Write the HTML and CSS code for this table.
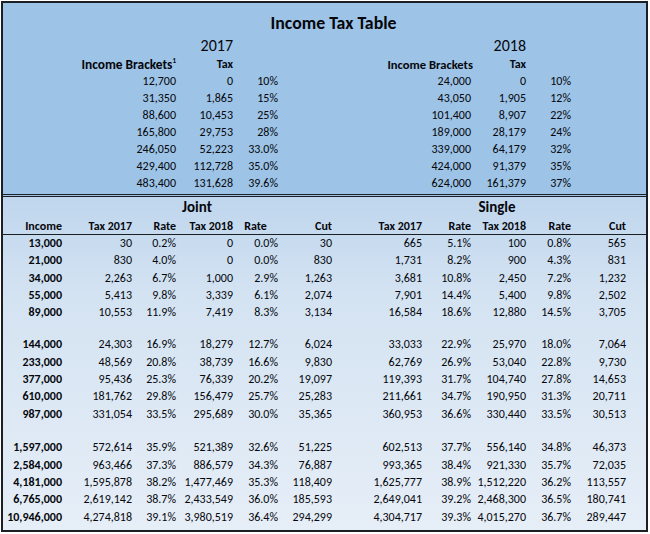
FILE: index.html
```html
<!DOCTYPE html>
<html>
<head>
<meta charset="utf-8">
<link rel="stylesheet" href="styles.css">
</head>
<body>
<div class="sheet">
  <section class="brackets">
    <div class="title">Income Tax Table</div>
    <div class="row yrow"><span class="c4 yr">2017</span><span class="c10 yr">2018</span></div>
    <div class="row trow b"><span class="s13 lbl">Income Brackets<sup>1</sup></span><span>Tax</span><span class="s79 lbl2">Income Brackets</span><span>Tax</span></div>
    <div class="row trow"><span class="c3">12,700</span><span>0</span><span>10%</span><span class="c9">24,000</span><span>0</span><span>10%</span></div>
    <div class="row trow"><span class="c3">31,350</span><span>1,865</span><span>15%</span><span class="c9">43,050</span><span>1,905</span><span>12%</span></div>
    <div class="row trow"><span class="c3">88,600</span><span>10,453</span><span>25%</span><span class="c9">101,400</span><span>8,907</span><span>22%</span></div>
    <div class="row trow"><span class="c3">165,800</span><span>29,753</span><span>28%</span><span class="c9">189,000</span><span>28,179</span><span>24%</span></div>
    <div class="row trow"><span class="c3">246,050</span><span>52,223</span><span>33.0%</span><span class="c9">339,000</span><span>64,179</span><span>32%</span></div>
    <div class="row trow"><span class="c3">429,400</span><span>112,728</span><span>35.0%</span><span class="c9">424,000</span><span>91,379</span><span>35%</span></div>
    <div class="row trow"><span class="c3">483,400</span><span>131,628</span><span>39.6%</span><span class="c9">624,000</span><span>161,379</span><span>37%</span></div>
  </section>
  <section class="results">
    <div class="row grow b"><span class="joint">Joint</span><span class="single">Single</span></div>
    <div class="row hrow b"><span>Income</span><span>Tax 2017</span><span>Rate</span><span>Tax 2018</span><span class="ctr">Rate</span><span>Cut</span><span></span><span>Tax 2017</span><span>Rate</span><span>Tax 2018</span><span>Rate</span><span>Cut</span></div>
    <div class="row drow"><span class="b">13,000</span><span>30</span><span>0.2%</span><span>0</span><span>0.0%</span><span>30</span><span></span><span>665</span><span>5.1%</span><span>100</span><span>0.8%</span><span>565</span></div>
    <div class="row drow"><span class="b">21,000</span><span>830</span><span>4.0%</span><span>0</span><span>0.0%</span><span>830</span><span></span><span>1,731</span><span>8.2%</span><span>900</span><span>4.3%</span><span>831</span></div>
    <div class="row drow"><span class="b">34,000</span><span>2,263</span><span>6.7%</span><span>1,000</span><span>2.9%</span><span>1,263</span><span></span><span>3,681</span><span>10.8%</span><span>2,450</span><span>7.2%</span><span>1,232</span></div>
    <div class="row drow"><span class="b">55,000</span><span>5,413</span><span>9.8%</span><span>3,339</span><span>6.1%</span><span>2,074</span><span></span><span>7,901</span><span>14.4%</span><span>5,400</span><span>9.8%</span><span>2,502</span></div>
    <div class="row drow"><span class="b">89,000</span><span>10,553</span><span>11.9%</span><span>7,419</span><span>8.3%</span><span>3,134</span><span></span><span>16,584</span><span>18.6%</span><span>12,880</span><span>14.5%</span><span>3,705</span></div>
    <div class="gap1"></div>
    <div class="row drow"><span class="b">144,000</span><span>24,303</span><span>16.9%</span><span>18,279</span><span>12.7%</span><span>6,024</span><span></span><span>33,033</span><span>22.9%</span><span>25,970</span><span>18.0%</span><span>7,064</span></div>
    <div class="row drow"><span class="b">233,000</span><span>48,569</span><span>20.8%</span><span>38,739</span><span>16.6%</span><span>9,830</span><span></span><span>62,769</span><span>26.9%</span><span>53,040</span><span>22.8%</span><span>9,730</span></div>
    <div class="row drow"><span class="b">377,000</span><span>95,436</span><span>25.3%</span><span>76,339</span><span>20.2%</span><span>19,097</span><span></span><span>119,393</span><span>31.7%</span><span>104,740</span><span>27.8%</span><span>14,653</span></div>
    <div class="row drow"><span class="b">610,000</span><span>181,762</span><span>29.8%</span><span>156,479</span><span>25.7%</span><span>25,283</span><span></span><span>211,661</span><span>34.7%</span><span>190,950</span><span>31.3%</span><span>20,711</span></div>
    <div class="row drow"><span class="b">987,000</span><span>331,054</span><span>33.5%</span><span>295,689</span><span>30.0%</span><span>35,365</span><span></span><span>360,953</span><span>36.6%</span><span>330,440</span><span>33.5%</span><span>30,513</span></div>
    <div class="gap2"></div>
    <div class="row drow"><span class="b">1,597,000</span><span>572,614</span><span>35.9%</span><span>521,389</span><span>32.6%</span><span>51,225</span><span></span><span>602,513</span><span>37.7%</span><span>556,140</span><span>34.8%</span><span>46,373</span></div>
    <div class="row drow"><span class="b">2,584,000</span><span>963,466</span><span>37.3%</span><span>886,579</span><span>34.3%</span><span>76,887</span><span></span><span>993,365</span><span>38.4%</span><span>921,330</span><span>35.7%</span><span>72,035</span></div>
    <div class="row drow"><span class="b">4,181,000</span><span>1,595,878</span><span>38.2%</span><span>1,477,469</span><span>35.3%</span><span>118,409</span><span></span><span>1,625,777</span><span>38.9%</span><span>1,512,220</span><span>36.2%</span><span>113,557</span></div>
    <div class="row drow"><span class="b">6,765,000</span><span>2,619,142</span><span>38.7%</span><span>2,433,549</span><span>36.0%</span><span>185,593</span><span></span><span>2,649,041</span><span>39.2%</span><span>2,468,300</span><span>36.5%</span><span>180,741</span></div>
    <div class="row drow"><span class="b">10,946,000</span><span>4,274,818</span><span>39.1%</span><span>3,980,519</span><span>36.4%</span><span>294,299</span><span></span><span>4,304,717</span><span>39.3%</span><span>4,015,270</span><span>36.7%</span><span>289,447</span></div>
  </section>
</div>
</body>
</html>
```
FILE: styles.css
```css
* { box-sizing: border-box; }
html, body { margin: 0; padding: 0; background: #fff; }
body {
  font-family: Carlito, "Open Sans", sans-serif;
  font-size: 12px;
  color: #05070c;
}
.sheet {
  margin: 1px;
  width: 647px;
  height: 531px;
  border: 2px solid #1c1f24;
  display: flex;
  flex-direction: column;
  overflow: hidden;
}
.row {
  display: grid;
  grid-template-columns: 59px 70px 44px 57px 45px 54px 36px 54px 49px 55px 45px 55px 1fr;
  white-space: nowrap;
}
.row > span { text-align: right; }
.b { font-weight: bold; }
.brackets {
  background: #9dc3e6;
  height: 194px;
  padding-top: 8px;
  border-bottom: 3px double #1c1f24;
  flex: none;
}
.title {
  height: 24px;
  line-height: 24px;
  font-size: 17.8px;
  font-weight: bold;
  text-align: center;
  padding-left: 18px;
}
.yrow { height: 21px; line-height: 21px; font-size: 16px; }
.c3 { grid-column: 3; }
.c4 { grid-column: 4; }
.c9 { grid-column: 9; }
.c10 { grid-column: 10; }
.s13 { grid-column: 1 / span 3; }
.s79 { grid-column: 7 / span 3; }
.lbl { font-size: 13.4px; }
.lbl2 { font-size: 12.6px; margin-right: -2px; }
.trow { height: 17px; line-height: 17px; }
sup { font-size: 7px; line-height: 0; vertical-align: 6px; }
.results {
  flex: 1;
  background: linear-gradient(to bottom, #bfd6ed 0%, #d4e3f2 30%, #e6eef7 100%);
}
.grow { height: 21px; line-height: 21px; font-size: 15px; }
.grow .joint { grid-column: 2 / span 5; text-align: center; }
.grow .single { grid-column: 8 / span 5; text-align: center; }
.hrow { height: 17px; line-height: 17px; border-bottom: 1px solid #1c1f24; }
.hrow .ctr { text-align: center; }
.drow { height: 17.3px; line-height: 17.3px; }
.gap1 { height: 15px; }
.gap2 { height: 16.5px; }
```
